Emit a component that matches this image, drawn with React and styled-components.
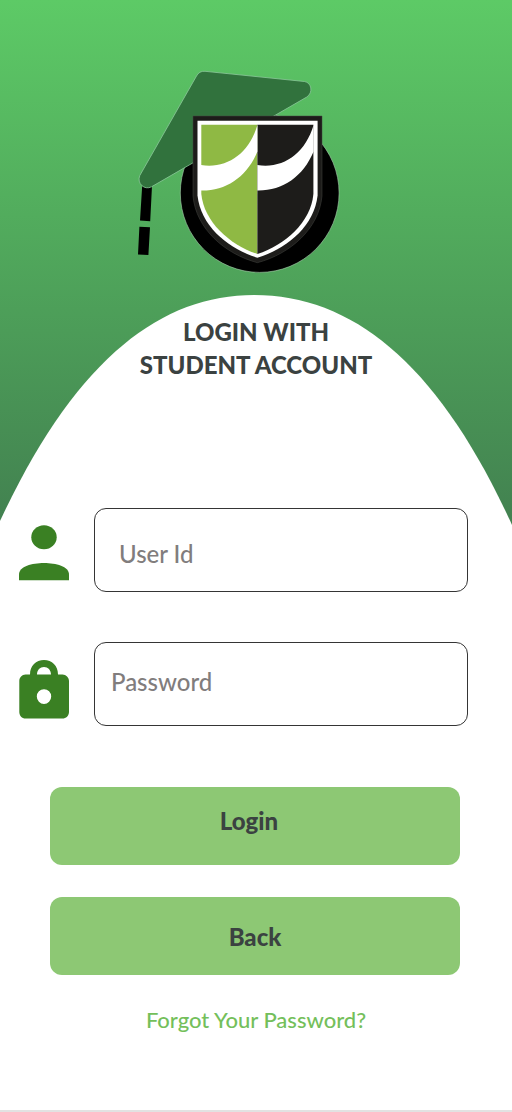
import React from "react";
import styled, { createGlobalStyle } from "styled-components";

const GlobalStyle = createGlobalStyle`
  *, *::before, *::after { box-sizing: border-box; }
  body {
    margin: 0;
    background: #ffffff;
    font-family: Lato, "Liberation Sans", sans-serif;
  }
`;

const Page = styled.main`
  display: flex;
  flex-direction: column;
  min-height: 100vh;
  background: #ffffff;
  border-bottom: 2px solid #e2e2e2;
`;

const Hero = styled.header`
  display: flex;
  flex-direction: column;
  align-items: center;
  padding-top: 70px;
  background: linear-gradient(#5dca66, #428150);
`;

const Emblem = styled.svg`
  width: 240px;
  height: 204px;
`;

const Dome = styled.div`
  position: relative;
  width: 100%;
  height: 230px;
  margin-top: 21px;
  padding-top: 20px;
`;

const DomeShape = styled.svg`
  position: absolute;
  inset: 0;
  width: 100%;
  height: 100%;
`;

const Title = styled.h1`
  position: relative;
  margin: 0;
  color: #3b4241;
  font-size: 24px;
  font-weight: 900;
  line-height: 33px;
  text-align: center;
`;

const Form = styled.form`
  position: relative;
  display: flex;
  flex-direction: column;
  margin-top: -17px;
`;

const Fields = styled.div`
  display: flex;
  flex-direction: column;
  gap: 50px;
  padding: 0 44px 0 19px;
`;

const Field = styled.label`
  display: flex;
  gap: 25px;
  height: 84px;
`;

const FieldIcon = styled.svg`
  flex: none;
  width: 50px;
  height: 84px;
  fill: #3a8023;
`;

const TextInput = styled.input`
  flex: 1;
  min-width: 0;
  padding: ${({ $padding }) => $padding};
  border: 1px solid #353535;
  border-radius: 12px;
  background: #ffffff;
  color: #3b4241;
  font-family: inherit;
  font-size: 24px;
  font-weight: 500;

  &::placeholder {
    color: #817d7d;
    opacity: 1;
  }
`;

const Actions = styled.div`
  display: flex;
  flex-direction: column;
  gap: 32px;
  margin-top: 61px;
  padding: 0 52px 0 50px;
`;

const Button = styled.button`
  height: 78px;
  padding: ${({ $padding }) => $padding};
  border: 0;
  border-radius: 12px;
  background: #8dc874;
  color: #3b4241;
  font-family: inherit;
  font-size: 24px;
  font-weight: 900;
  cursor: pointer;
`;

const ForgotLink = styled.a`
  align-self: center;
  margin: 30px 0;
  color: #74bf5b;
  font-size: 22px;
  font-weight: 500;
  line-height: 30px;
  text-decoration: none;
`;

function Logo() {
  return (
    <Emblem viewBox="136 70 240 204" role="img" aria-label="School shield with graduation cap">
      <circle cx="259.7" cy="193" r="79.4" fill="#000" stroke="#a9cfae" strokeWidth="0.6" />
      <path d="M142.3 184 L152 186 L150.2 221.3 L140 220.6 Z M139.4 226.7 L150 227.3 L148.4 255 L138 254.4 Z" fill="#000" />
      <path
        d="M205 71.3 L304.5 81.5 C311.5 82.5 313.5 92.5 306.8 97 L151.5 186.8 C144.5 190.5 136.5 183.5 139.8 175.5 L196.5 76 C198.5 72.5 201 71 205 71.3 Z"
        fill="#31723d"
        stroke="#8cc99a"
        strokeWidth="0.8"
      />
      <path
        d="M193 116 H322 V196 C319 229 290 254 257.4 262.7 C225 254 196 229 193 196 Z"
        fill="#1d1c1a"
        stroke="#454643"
        strokeWidth="0.5"
      />
      <path d="M197.5 120.8 H317.6 V195.5 C314 227 286 249 257.4 257.8 C229 249 201 227 197.5 195.5 Z" fill="#fff" />
      <path d="M201.3 124.8 H257.4 V254 C230 245 204 222 201.3 194 Z" fill="#8fb944" />
      <path d="M257.4 124.8 H313.4 V194 C311 222 285 245 257.4 254 Z" fill="#1d1c1a" />
      <path d="M257.4 125 C249 154 227 169 201 165 V190.5 C226 191 247 177 257.4 151.5 Z" fill="#fff" />
      <path d="M313.6 125 C305 154 283 169 257.4 165 V190.5 C282 191 303 177 313.6 151.5 Z" fill="#fff" />
    </Emblem>
  );
}

function PersonIcon() {
  return (
    <FieldIcon viewBox="0 0 50 84" aria-hidden="true">
      <ellipse cx="25" cy="29.2" rx="12.7" ry="12" />
      <path d="M0 72.3 V66.5 C0 58.5 13 55 25 55 S50 58.5 50 66.5 V72.3 Z" />
    </FieldIcon>
  );
}

function LockIcon() {
  return (
    <FieldIcon viewBox="0 0 50 84" aria-hidden="true">
      <path
        fillRule="evenodd"
        d="M11 32.5 C11 23.5 17 18 25 18 S39 23.5 39 32.5 H43.5 C47 32.5 50 35.5 50 39 V70 C50 73.8 47 76.5 43.5 76.5 H6.5 C3 76.5 0.3 73.8 0.3 70 V39 C0.3 35.5 3 32.5 6.5 32.5 Z M18 32.5 H32 C32 28 29 25 25 25 S18 28 18 32.5 Z M25 47.2 A7.2 7.4 0 1 0 25 62 A7.2 7.4 0 1 0 25 47.2 Z"
      />
    </FieldIcon>
  );
}

export default function App() {
  return (
    <>
      <GlobalStyle />
      <Page>
        <Hero>
          <Logo />
          <Dome>
            <DomeShape viewBox="0 0 512 230" preserveAspectRatio="none" aria-hidden="true">
              <path d="M0 226 C75 65 160 0 254 0 C355 0 440 72 512 230 H0 Z" fill="#fff" />
            </DomeShape>
            <Title>
              LOGIN WITH
              <br />
              STUDENT ACCOUNT
            </Title>
          </Dome>
        </Hero>
        <Form onSubmit={(event) => event.preventDefault()}>
          <Fields>
            <Field>
              <PersonIcon />
              <TextInput type="text" name="userId" placeholder="User Id" aria-label="User Id" $padding="6px 24px 0" />
            </Field>
            <Field>
              <LockIcon />
              <TextInput type="password" name="password" placeholder="Password" aria-label="Password" $padding="0 16px 6px" />
            </Field>
          </Fields>
          <Actions>
            <Button type="submit" $padding="0 12px 12px 0">Login</Button>
            <Button type="button" $padding="0">Back</Button>
          </Actions>
          <ForgotLink href="#forgot">Forgot Your Password?</ForgotLink>
        </Form>
      </Page>
    </>
  );
}
